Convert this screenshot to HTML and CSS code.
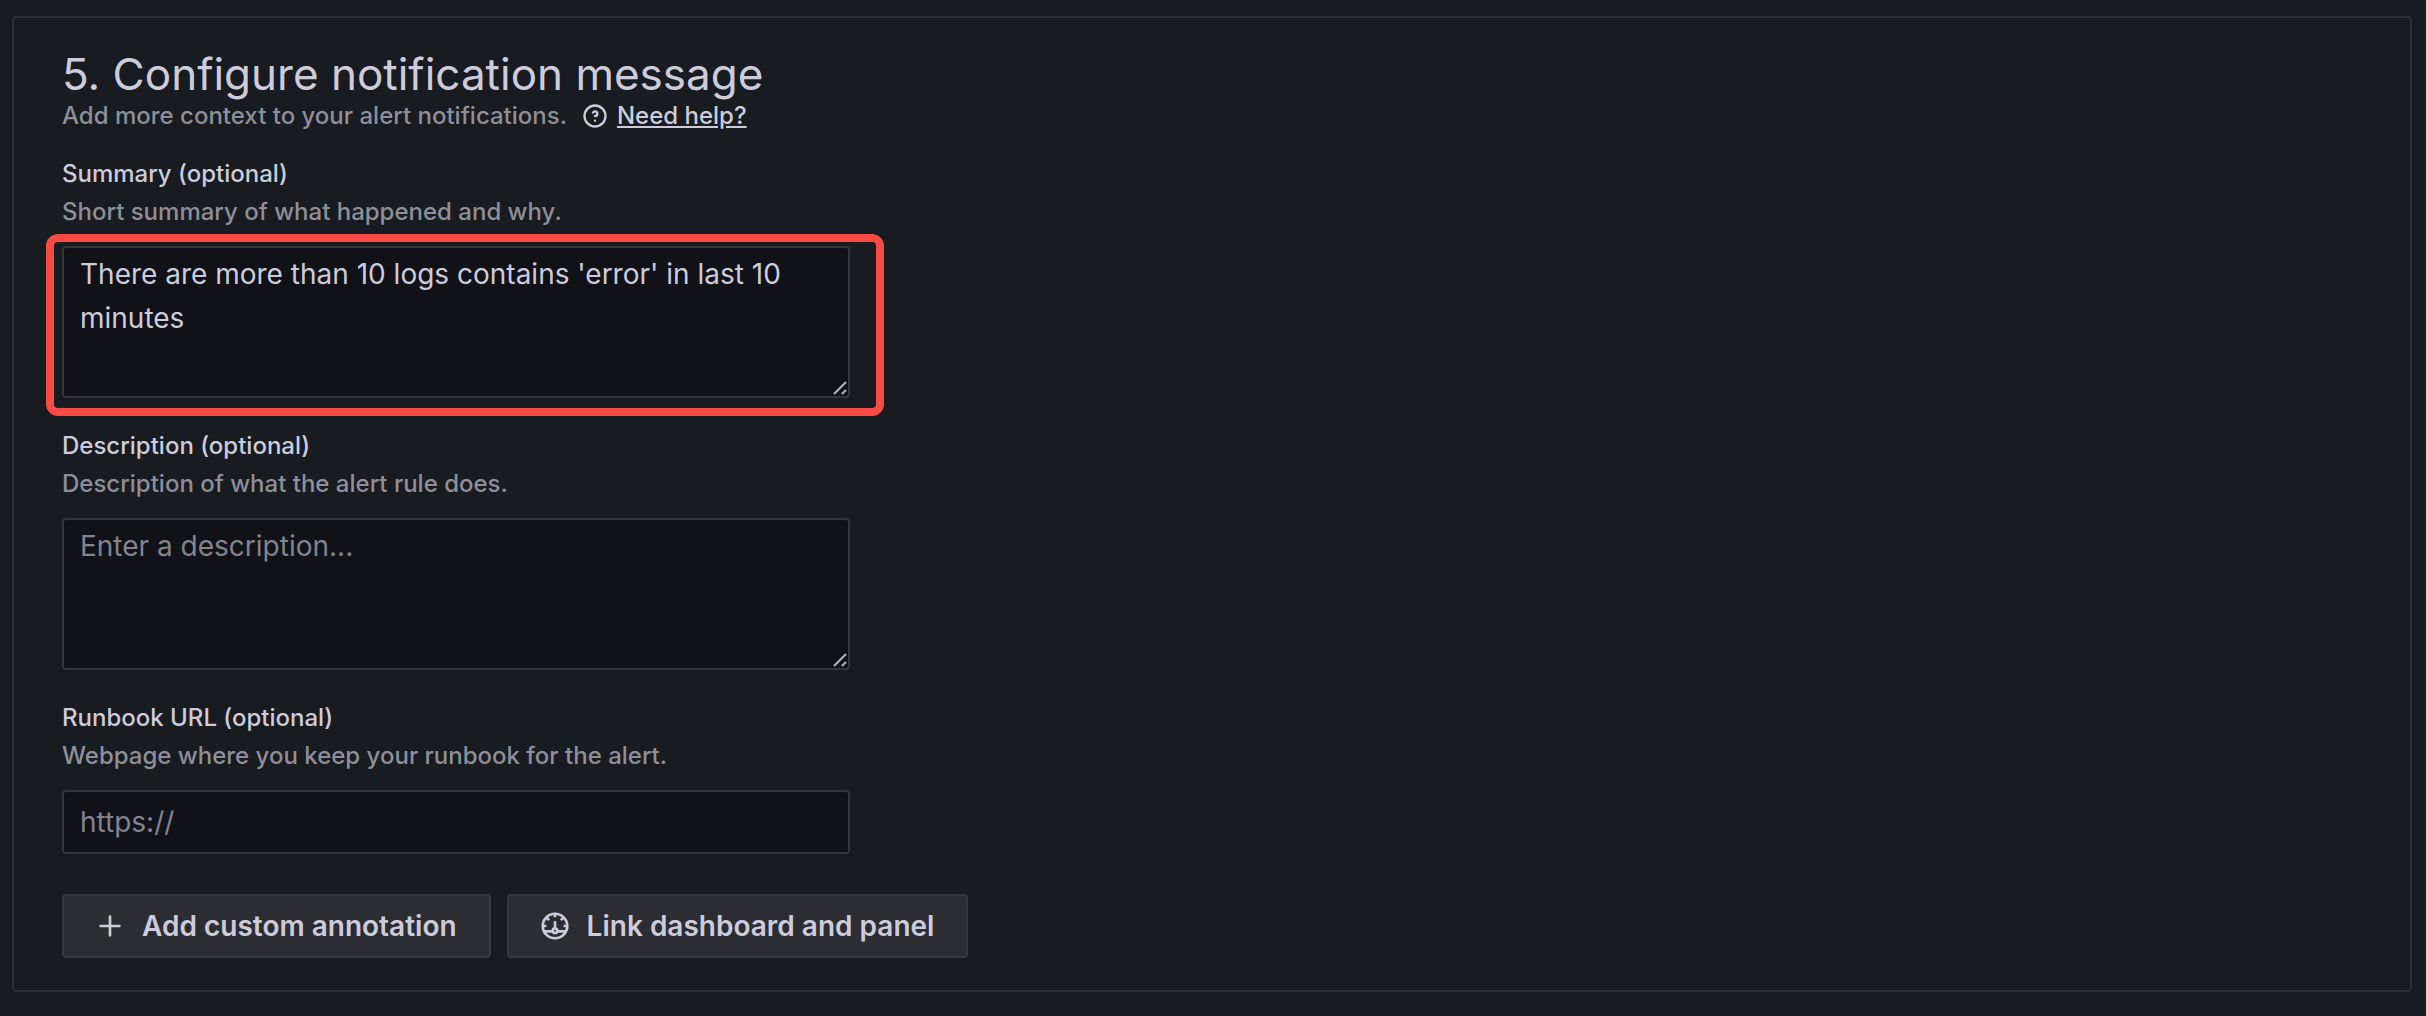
FILE: index.html
```html
<!DOCTYPE html>
<html lang="en">
<head>
<meta charset="utf-8">
<meta name="viewport" content="width=device-width, initial-scale=1">
<title>Configure notification message</title>
<link rel="stylesheet" href="styles.css">
</head>
<body>
<main class="card">
  <header class="card-header">
    <h2 class="title">5. Configure notification message</h2>
    <div class="subtitle">
      <span>Add more context to your alert notifications.</span>
      <a class="help" href="#help">
        <svg class="help-icon" viewBox="0 0 24 24" aria-hidden="true"><path d="M11.29,15.29a1.58,1.58,0,0,0-.12.15.76.76,0,0,0-.09.18.64.64,0,0,0-.06.18,1.36,1.36,0,0,0,0,.2.84.84,0,0,0,.08.38.9.9,0,0,0,.54.54.94.94,0,0,0,.76,0,.9.9,0,0,0,.54-.54A1,1,0,0,0,13,16a1,1,0,0,0-.29-.71A1,1,0,0,0,11.29,15.29ZM12,2A10,10,0,1,0,22,12,10,10,0,0,0,12,2Zm0,18a8,8,0,1,1,8-8A8,8,0,0,1,12,20ZM12,7A3,3,0,0,0,9.4,8.5a1,1,0,1,0,1.73,1A1,1,0,0,1,12,9a1,1,0,0,1,0,2,1,1,0,1,0,0,2,3,3,0,0,0,0-6Z"/></svg>
        <span class="help-text">Need help?</span>
      </a>
    </div>
  </header>

  <form class="form">
    <div class="field">
      <label class="label" for="summary">Summary (optional)</label>
      <p class="hint" id="summary-hint">Short summary of what happened and why.</p>
      <div class="control highlighted">
        <textarea class="input area" id="summary" aria-describedby="summary-hint">There are more than 10 logs contains 'error' in last 10 minutes</textarea>
        <svg class="grip" viewBox="0 0 16 16" aria-hidden="true"><path d="M2 14L14 2M10 14L14 10"/></svg>
      </div>
    </div>
    <div class="field">
      <label class="label" for="description">Description (optional)</label>
      <p class="hint" id="description-hint">Description of what the alert rule does.</p>
      <div class="control">
        <textarea class="input area" id="description" placeholder="Enter a description..." aria-describedby="description-hint"></textarea>
        <svg class="grip" viewBox="0 0 16 16" aria-hidden="true"><path d="M2 14L14 2M10 14L14 10"/></svg>
      </div>
    </div>
    <div class="field">
      <label class="label" for="runbook">Runbook URL (optional)</label>
      <p class="hint" id="runbook-hint">Webpage where you keep your runbook for the alert.</p>
      <div class="control">
        <input class="input line" id="runbook" type="text" placeholder="https://" aria-describedby="runbook-hint">
      </div>
    </div>
    <div class="actions">
      <button class="button" type="button">
        <svg class="icon" viewBox="0 0 24 24" aria-hidden="true"><path d="M19,11H13V5a1,1,0,0,0-2,0v6H5a1,1,0,0,0,0,2h6v6a1,1,0,0,0,2,0V13h6a1,1,0,0,0,0-2Z"/></svg>
        <span>Add custom annotation</span>
      </button>
      <button class="button" type="button">
        <svg class="icon gauge" viewBox="0 0 24 24" aria-hidden="true"><circle cx="12" cy="12" r="9.2"/><path d="M12 3v2.5M3 12h2.5M21 12h-2.5M5.8 5.8l1.8 1.8M18.2 5.8l-1.8 1.8M12 8.5v5M4 16h6.3M13.7 16H20"/><circle cx="12" cy="15.5" r="1.7"/></svg>
        <span>Link dashboard and panel</span>
      </button>
    </div>
  </form>
</main>
</body>
</html>
```

FILE: styles.css
```css
* {
  box-sizing: border-box;
}

body {
  margin: 0;
  padding: 16px 14px 24px 12px;
  background: #181b1f;
  color: #ccccdc;
  font-family: Inter, "Liberation Sans", sans-serif;
  font-size: 24px;
  line-height: 32px;
}

.card {
  padding: 32px 48px;
  border: 2px solid #2d3035;
  border-radius: 4px;
}

.title {
  margin: 0;
  font-size: 44px;
  font-weight: 400;
  line-height: 48px;
}

.subtitle {
  display: flex;
  align-items: center;
  gap: 14px;
  height: 36px;
  color: #8e8f9b;
  font-weight: 500;
}

.help {
  display: flex;
  align-items: center;
  gap: 8px;
  color: #ccccdc;
  text-decoration: none;
}

.help-icon {
  width: 28px;
  height: 28px;
  fill: currentColor;
}

.help-text {
  text-decoration: underline;
}

.form {
  display: flex;
  flex-direction: column;
  gap: 32px;
  margin-top: 24px;
}

.label {
  display: block;
  font-weight: 500;
}

.hint {
  margin: 6px 0 18px;
  color: #8e8f9b;
  font-weight: 500;
}

.control {
  position: relative;
  width: 100%;
  max-width: 788px;
}

.highlighted::after {
  content: "";
  position: absolute;
  inset: -12px -34px -18px -16px;
  border: 8px solid #f84b46;
  border-radius: 12px;
  pointer-events: none;
}

.input {
  display: block;
  width: 100%;
  margin: 0;
  border: 2px solid #35363c;
  border-radius: 4px;
  background: #111217;
  color: #ccccdc;
  font: inherit;
  font-size: 28px;
  line-height: 44px;
}

.input::placeholder {
  color: #83848f;
  opacity: 1;
}

.area {
  height: 152px;
  padding: 4px 16px;
  resize: none;
}

.line {
  height: 64px;
  padding: 0 16px;
}

.grip {
  position: absolute;
  right: 2px;
  bottom: 2px;
  width: 16px;
  height: 16px;
  fill: none;
  stroke: #b4b4b6;
  stroke-width: 2;
}

.actions {
  display: flex;
  flex-wrap: wrap;
  gap: 16px;
  margin-top: 8px;
}

.button {
  display: flex;
  align-items: center;
  gap: 16px;
  height: 64px;
  padding: 0 32px 0 30px;
  border: 2px solid #35373d;
  border-radius: 4px;
  background: #2c2d33;
  color: #ccccdc;
  font: inherit;
  font-size: 28px;
  font-weight: 600;
}

.icon {
  width: 32px;
  height: 32px;
  fill: currentColor;
}

.gauge {
  fill: none;
  stroke: currentColor;
  stroke-width: 2;
}
```
